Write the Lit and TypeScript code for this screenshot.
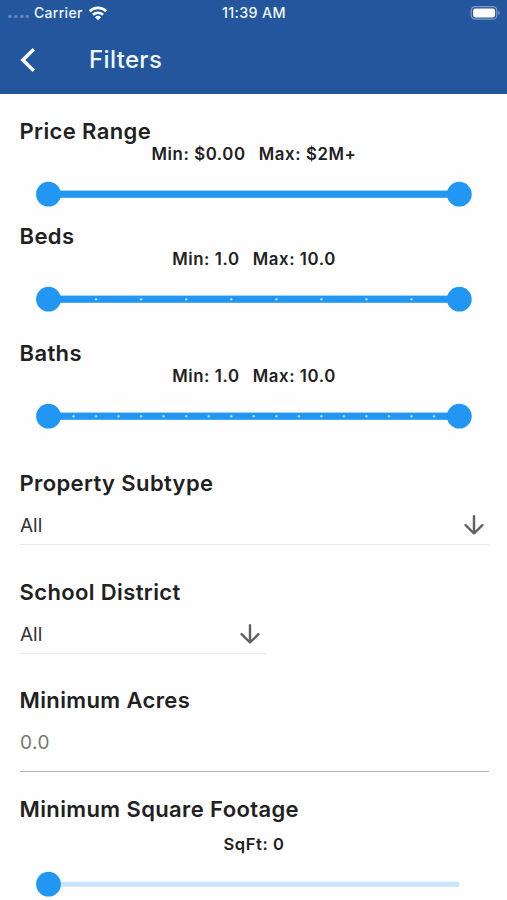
import { LitElement, html, css, svg } from "lit";
import { customElement, property } from "lit/decorators.js";

@customElement("range-track")
class RangeTrack extends LitElement {
  @property({ type: Number }) divisions = 0;
  @property({ type: Boolean }) single = false;

  static styles = css`
    :host { display: block; height: 59px; }
    svg { display: block; width: 507px; height: 59px; }
    .active { fill: #2196f3; }
    .rest { fill: #c8e4fb; }
    .tick { fill: #b5dcfb; }
  `;

  render() {
    const first = 51;
    const step = this.divisions ? 405.6 / this.divisions : 0;
    const ticks = Array.from({ length: Math.max(0, this.divisions - 1) }, (_, i) => first + step * (i + 1));
    return html`<svg viewBox="0 0 507 59">
      ${this.single
        ? svg`<rect class="rest" x="48" y="27.7" width="411.3" height="5" rx="2.5"></rect>`
        : svg`<rect class="active" x="48" y="26.6" width="411" height="7.2"></rect>`}
      ${ticks.map((x) => svg`<circle class="tick" cx=${x} cy="30.2" r="1.2"></circle>`)}
      <circle class="active" cx="48.5" cy="30.2" r="12.4"></circle>
      ${this.single ? null : svg`<circle class="active" cx="459.3" cy="30.2" r="12.4"></circle>`}
    </svg>`;
  }
}

@customElement("app-root")
class AppRoot extends LitElement {
  static styles = css`
    :host {
      display: block; width: 507px; height: 900px; overflow: hidden;
      background: #fefefe; color: #212121;
      font-family: Inter, Roboto, sans-serif;
    }
    header { height: 93.5px; background: #23569c; color: #eff6ff; }
    .status {
      display: grid; grid-template-columns: 1fr auto 1fr; align-items: center;
      height: 25px; padding: 0 6px 0 8px; font-size: 14px; font-weight: 500;
    }
    .carrier { display: flex; align-items: center; }
    .carrier span { letter-spacing: 0.3px; }
    .signal { width: 22px; height: 8px; margin: 4px 4px 0 0; fill: #6385bb; }
    .wifi { width: 20px; height: 16px; margin-left: 5px; }
    .time { font-size: 14.3px; letter-spacing: 0.35px; padding-right: 1px; }
    .battery { width: 31px; height: 16px; justify-self: end; }
    .bar { display: flex; align-items: center; height: 69px; padding-left: 19px; }
    .back { width: 18px; height: 26px; margin-right: 52px; }
    .title { font-size: 24px; font-weight: 500; letter-spacing: 0.35px; }
    main { padding-top: 24px; }
    .beds { margin-bottom: 12px; }
    .baths { margin-bottom: 25px; }
    h2 {
      margin: 0; padding-left: 19.5px; height: 26px; line-height: 26px;
      font-size: 22px; font-weight: 600; letter-spacing: 0.38px;
    }
    .values {
      display: flex; justify-content: center; gap: 13.2px; height: 20px; line-height: 20px;
      font-size: 16.8px; font-weight: 600; letter-spacing: 0.58px; padding-left: 1px;
    }
    .select {
      display: flex; align-items: center; justify-content: space-between;
      box-sizing: border-box; height: 40px; margin: 9px 18.5px 34px 20px; padding: 1px 4px 0 0;
      border-bottom: 1px solid #e9e9e9; font-size: 19px; color: #333;
    }
    .select span { padding-top: 2px; }
    .half { width: 245.5px; padding-right: 4.5px; margin-bottom: 33.5px; }
    .arrow { width: 22px; height: 22px; }
    .field {
      box-sizing: border-box; height: 59px; margin: 0 18.5px 23.5px 20px; padding-top: 18px;
      border-bottom: 1.5px solid #b0b0b0; font-size: 19px; line-height: 24px; letter-spacing: 0.5px; color: #777;
    }
    .square { padding-top: 12px; font-size: 16.5px; }
  `;

  private arrow = () => html`<svg class="arrow" viewBox="0 0 22 22" fill="none" stroke="#606060" stroke-width="2.4" stroke-linecap="round" stroke-linejoin="round">
    <path d="M11 2.2v17M2.6 11.2l8.4 8.3 8.4-8.3"></path>
  </svg>`;

  render() {
    return html`
      <header>
        <div class="status">
          <div class="carrier">
            <svg class="signal" viewBox="0 0 22 8">
              ${[2, 7.9, 13.8, 19.3].map((x) => svg`<circle cx=${x} cy="5.5" r="1.8"></circle>`)}
            </svg>
            <span>Carrier</span>
            <svg class="wifi" viewBox="0 0 20 16" fill="none" stroke="#fff" stroke-width="2.6">
              <path d="M1.6 6.3a12 12 0 0 1 16.8 0M5 9.8a7.2 7.2 0 0 1 10 0"></path>
              <path d="M10 15.2L7 12.2a4.4 4.4 0 0 1 6 0z" fill="#fff" stroke="none"></path>
            </svg>
          </div>
          <div class="time">11:39 AM</div>
          <svg class="battery" viewBox="0 0 31 16">
            <rect x="1.2" y="1.6" width="25.6" height="12.6" rx="4" fill="none" stroke="#7e9dca" stroke-width="1.2"></rect>
            <rect x="3.1" y="3.4" width="22" height="9" rx="2.3" fill="#fff"></rect>
            <path d="M28.3 5.7a2.4 2.4 0 0 1 0 4.4z" fill="#7e9dca"></path>
          </svg>
        </div>
        <div class="bar">
          <svg class="back" viewBox="0 0 18 26" fill="none" stroke="#fff" stroke-width="3.4">
            <path d="M14.8 2.2L3.8 13l11 10.8"></path>
          </svg>
          <div class="title">Filters</div>
        </div>
      </header>
      <main>
        <section>
          <h2>Price Range</h2>
          <div class="values"><span>Min: $0.00</span><span>Max: $2M+</span></div>
          <range-track></range-track>
        </section>
        <section class="beds">
          <h2>Beds</h2>
          <div class="values"><span>Min: 1.0</span><span>Max: 10.0</span></div>
          <range-track .divisions=${9}></range-track>
        </section>
        <section class="baths">
          <h2>Baths</h2>
          <div class="values"><span>Min: 1.0</span><span>Max: 10.0</span></div>
          <range-track .divisions=${18}></range-track>
        </section>
        <section>
          <h2>Property Subtype</h2>
          <div class="select"><span>All</span>${this.arrow()}</div>
        </section>
        <section>
          <h2>School District</h2>
          <div class="select half"><span>All</span>${this.arrow()}</div>
        </section>
        <section>
          <h2>Minimum Acres</h2>
          <div class="field">0.0</div>
        </section>
        <section>
          <h2>Minimum Square Footage</h2>
          <div class="values square">SqFt: 0</div>
          <range-track single></range-track>
        </section>
      </main>
    `;
  }
}
